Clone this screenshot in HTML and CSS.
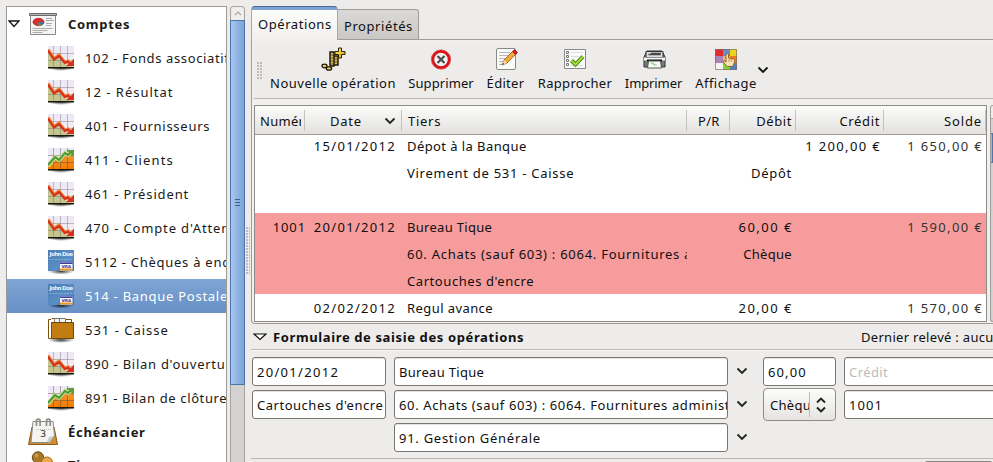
FILE: index.html
```html
<!DOCTYPE html>
<html lang="fr">
<head>
<meta charset="utf-8">
<title>Comptes</title>
<link rel="stylesheet" href="styles.css">
</head>
<body>
<svg class="defs" width="0" height="0">
  <defs>
    <linearGradient id="sky" x1="0" y1="0" x2="0" y2="1"><stop offset="0" stop-color="#ece8f7"/><stop offset="1" stop-color="#f7edee"/></linearGradient>
    <linearGradient id="orange" x1="0" y1="0" x2="0" y2="1"><stop offset="0" stop-color="#ee9b38"/><stop offset="1" stop-color="#f57900"/></linearGradient>
    <radialGradient id="shade"><stop offset="0" stop-color="#000" stop-opacity=".75"/><stop offset="1" stop-color="#000" stop-opacity="0"/></radialGradient>
    <linearGradient id="cardblue" x1="0" y1="0" x2="1" y2="1"><stop offset="0" stop-color="#4a7db5"/><stop offset=".6" stop-color="#5b8ec4"/><stop offset="1" stop-color="#3a6ca6"/></linearGradient>
    <linearGradient id="gold" x1="0" y1="0" x2="1" y2="1"><stop offset="0" stop-color="#ffef78"/><stop offset="1" stop-color="#d8a400"/></linearGradient>
  </defs>
  <symbol id="down" viewBox="0 0 26 26">
    <ellipse cx="13" cy="22" rx="13" ry="3" fill="url(#shade)"/>
    <path d="M0 0h26v22H0z" fill="url(#sky)"/>
    <path d="M0 5l6 9 5-3 7 8 4-1 4 3v1H0z" fill="#c3c58d"/>
    <path d="M5.500 0v22M12.500 0v22M19.500 0v22M0 7.500h26M0 14.500h26" stroke="#6d6472" stroke-opacity=".4" fill="none"/>
    <path d="M0 3.500l6 9 5-3.500 6 7.500 3-1.500 3 3" fill="none" stroke="#ee8b3c" stroke-width="3.200"/>
    <path d="M0 4.500l6 9 5-3.500 6 7 3-1.500 3 3" fill="none" stroke="#d5301f" stroke-width="2.200"/>
    <path d="M26 12.500v7.500h-8l4-3z" fill="#d5301f"/>
    <path d="M0 21h26v1.500H0z" fill="#17190c"/>
  </symbol>
  <symbol id="up" viewBox="0 0 26 26">
    <ellipse cx="13" cy="22" rx="13" ry="3" fill="url(#shade)"/>
    <path d="M0 0h26v22H0z" fill="url(#sky)"/>
    <path d="M0 19l7-9 4 3 6-7 4 2 5-3v17H0z" fill="url(#orange)"/>
    <path d="M5.500 0v22M12.500 0v22M19.500 0v22M0 7.500h26M0 14.500h26" stroke="#4c3d2c" stroke-opacity=".4" fill="none"/>
    <path d="M0 18l7-9 4 3 6-7 3 2 3-3" fill="none" stroke="#c0d9a0" stroke-width="4"/>
    <path d="M0 17l7-8 4 3 6-7 3 2 4-4" fill="none" stroke="#4a9a24" stroke-width="1.900"/>
    <path d="M18 2h8v7l-3-3z" fill="#5d9c38"/>
    <path d="M0 21h26v1.500H0z" fill="#17190c"/>
  </symbol>
  <symbol id="card" viewBox="0 0 26 26">
    <ellipse cx="13" cy="21.500" rx="13" ry="3" fill="url(#shade)"/>
    <path d="M0 0h26v21H0z" fill="url(#cardblue)"/>
    <text x="1.500" y="5.500" class="cardname" textLength="23.500">John Doe</text>
    <path d="M1 9.500h25" stroke="#a9c5df" stroke-opacity=".6" stroke-dasharray="2 1"/>
    <path d="M12 12.500h12.500v8H12z" fill="#fff"/>
    <path d="M12 12.500h12.500v1.500H12z" fill="#453c9c"/>
    <path d="M12 18.500h12.500v2H12z" fill="#eb9a24"/>
    <text x="13.500" y="18.300" class="visa" textLength="9.500">VISA</text>
  </symbol>
</svg>

<div class="window">
  <aside class="tree">
    <div class="node root">
      <svg class="expander" width="12" height="8" viewBox="0 0 12 8"><path d="M1 1h10L6 6.500z" fill="#fff" stroke="#111" stroke-width="1.300"/></svg>
      <svg class="rooticon" width="30" height="24" viewBox="0 0 30 24">
        <path d="M2.500 3v19.500h25V3z" fill="#f4f4f3" stroke="#888a85"/>
        <path d="M1.500 1.500h27v2h-27z" fill="#b8bab6" stroke="#6b6d69"/>
        <ellipse cx="10.500" cy="10" rx="5.500" ry="3.700" fill="#dd2a2a" stroke="#8c1d1d" stroke-width=".7"/>
        <path d="M10.500 10h5.500a5.500 3.700 0 0 1-5 3.700z" fill="#3b70b4"/><path d="M10.500 10l3 3-3 .7z" fill="#57a639"/>
        <path d="M18 6.500h6M18 8.500h8M18 11.500h6M18 13.500h5M4.500 16.500h20M4.500 18.500h15M4.500 20.500h10" stroke="#aaaba8"/>
      </svg>
      <b>Comptes</b>
    </div>
    <div class="node"><svg class="ico"><use href="#down"/></svg><span class="s65">102 - Fonds associatifs</span></div>
    <div class="node"><svg class="ico"><use href="#down"/></svg><span class="s100">12 - Résultat</span></div>
    <div class="node"><svg class="ico"><use href="#down"/></svg><span class="s75">401 - Fournisseurs</span></div>
    <div class="node"><svg class="ico"><use href="#up"/></svg><span class="s110">411 - Clients</span></div>
    <div class="node"><svg class="ico"><use href="#down"/></svg><span class="s85">461 - Président</span></div>
    <div class="node"><svg class="ico"><use href="#down"/></svg><span class="s85">470 - Compte d'Attente</span></div>
    <div class="node"><svg class="ico"><use href="#card"/></svg><span class="s75">5112 - Chèques à encaisser</span></div>
    <div class="node selected"><svg class="ico"><use href="#card"/></svg><span class="s75">514 - Banque Postale</span></div>
    <div class="node">
      <svg class="ico" viewBox="0 0 26 26"><ellipse cx="13" cy="22" rx="13" ry="3" fill="url(#shade)"/><path d="M.5 20.500V1.500H3l1-1h2.500l1 1h16V5" fill="#fff" stroke="#79520d"/><path d="M6.500 5V.5h11V5M11.500 1v4" fill="#f5f5f5" stroke="#777"/><path d="M3.500 20.500V4.500h22v16z" fill="#c17d11" stroke="#6c460a"/><path d="M.5 20.500h3v-16" fill="none" stroke="#79520d"/></svg>
      <span class="s100">531 - Caisse</span>
    </div>
    <div class="node"><svg class="ico"><use href="#down"/></svg><span class="s75">890 - Bilan d'ouverture</span></div>
    <div class="node"><svg class="ico"><use href="#up"/></svg><span class="s65">891 - Bilan de clôture</span></div>
    <div class="node second">
      <svg width="30" height="28" viewBox="0 0 30 28"><path d="M4 9h22l3.500 17.500h-29z" fill="#cd8d35" stroke="#8d5d15"/><path d="M5 3.500h20l1.500 14-5 7H3z" fill="#f4f4f2" stroke="#8b8b88"/><path d="M26.500 17.500l-5 7L19 24l2-5z" fill="#c9cdc6"/><path d="M8.500 8V3a1.800 1.800 0 0 1 3.600 0v5M18.500 8V3a1.800 1.800 0 0 1 3.600 0v5" fill="none" stroke="#8b8e89" stroke-width="1.700"/><path d="M8 11.500h15" stroke="#bbb" stroke-dasharray="1 1"/><text x="12" y="19" class="day" textLength="6.500" lengthAdjust="spacingAndGlyphs">3</text></svg>
      <b>Échéancier</b>
    </div>
    <div class="node second tiers">
      <svg width="30" height="28" viewBox="0 0 30 28"><path d="M4 24q1-9 8-11 7 2 8 11z" fill="#88601e"/><circle cx="10" cy="6.500" r="5.700" fill="#a87828" stroke="#6c460a"/><circle cx="19" cy="11.500" r="5.500" fill="#e9a84c" stroke="#aa6b16"/><circle cx="8.500" cy="4.500" r="2" fill="#c79b52"/></svg>
      <b>Tiers</b>
    </div>
  </aside>

  <div class="scroll">
    <div class="stepper"><svg width="8" height="5" viewBox="0 0 8 5"><path d="M1 4l3-3 3 3" fill="none" stroke="#aaa8a4" stroke-width="1.200"/></svg></div>
    <div class="thumb"><i></i><i></i><i></i></div>
  </div>
  <div class="grip"></div>

  <main>
    <div class="tabs">
      <div class="tab active"><span class="s55">Opérations</span></div>
      <div class="tab"><span class="s55">Propriétés</span></div>
    </div>
    <section class="book">
      <div class="toolbar">
        <div class="handle"></div>
        <button class="tool b-new">
          <svg width="26" height="24" viewBox="0 0 26 24"><path d="M10 5h4v14h-4zM14 9h4v9h-4z" fill="#d9ba62" stroke="#211a0a" stroke-width="1.500"/><path d="M10 8h4M10 11h4M10 14h4M14 12h4M14 15h4M10 17h4" stroke="#4b3a13" stroke-width=".8"/><ellipse cx="4.500" cy="19" rx="2.500" ry="1.800" fill="#edcf70" stroke="#211a0a" stroke-width="1.300"/><ellipse cx="9" cy="21.500" rx="2.700" ry="1.700" fill="#edcf70" stroke="#211a0a" stroke-width="1.300"/><path d="M18.500 1h3v3.500H25v3h-3.500V11h-3V7.500H15v-3h3.500z" fill="url(#gold)" stroke="#2b230a"/></svg>
          <span class="s50">Nouvelle opération</span>
        </button>
        <button class="tool b-del">
          <svg width="24" height="24" viewBox="0 0 24 24"><circle cx="12" cy="12.500" r="8.300" fill="#f2f2f1" stroke="#d3141b" stroke-width="3"/><circle cx="12" cy="12.500" r="9.600" fill="none" stroke="#eb5054" stroke-width=".8"/><path d="M8.500 9l7 7M15.500 9l-7 7" stroke="#4a4d4a" stroke-width="2.200"/></svg>
          <span class="s10">Supprimer</span>
        </button>
        <button class="tool b-edit">
          <svg width="24" height="24" viewBox="0 0 24 24"><rect x="2.500" y="1.500" width="19" height="21" rx="1.500" fill="#fafafa" stroke="#888a85"/><path d="M5 5.500h11M5 8.500h10M5 11.500h8M5 14.500h5M5 17.500h3" stroke="#b8b8b6"/><path d="M8 18l2-5 8.500-8.500 3 3L13 16z" fill="#f5a53a" stroke="#8f5b18" stroke-width=".8"/><path d="M8 18l2-5 3 3z" fill="#f3dfba"/><path d="M8 18l1-2 1.200 1z" fill="#222"/><path d="M18.500 4.500l2-1.800 3 3-2 1.800z" fill="#d81e24" stroke="#a4171c"/></svg>
          <span>Éditer</span>
        </button>
        <button class="tool b-rap">
          <svg width="24" height="24" viewBox="0 0 24 24"><path d="M1.500 2.500h21v19h-21z" fill="#fafafa" stroke="#888a85"/><path d="M3.500 4.500h2v2h-2zM3.500 8.500h2v2h-2zM3.500 12.500h2v2h-2zM3.500 16.500h2v2h-2z" fill="#fff" stroke="#777"/><path d="M8 5.500h12M8 9.500h8M8 18.500h12" stroke="#ddd"/><path d="M8.500 13.500l4 4 7.500-8" fill="none" stroke="#3c7a06" stroke-width="4"/><path d="M8.500 13.500l4 4 7.500-8" fill="none" stroke="#a5e339" stroke-width="2"/></svg>
          <span>Rapprocher</span>
        </button>
        <button class="tool b-imp">
          <svg width="24" height="24" viewBox="0 0 24 24"><path d="M2 10l3-6h15l3 6v10H2z" fill="#75797a" stroke="#303334"/><path d="M4 4.500h17v6H4z" fill="#d9dbda" stroke="#303334"/><path d="M6.500 7.500h12M9 6.500h10" stroke="#44484a" stroke-width="1.500"/><path d="M2 10.500h21v3H2z" fill="#f2f3f2"/><path d="M5 13.500h15" stroke="#111" stroke-width="2"/><path d="M6.500 14h12l1 7h-14z" fill="#f8fbf7" stroke="#555"/><path d="M8 16l3-1 2 2 3 1-3 1z" fill="#add4a1"/></svg>
          <span class="s0">Imprimer</span>
        </button>
        <button class="tool b-aff">
          <svg width="24" height="24" viewBox="0 0 24 24"><path d="M1 2h8v7H1z" fill="#e12b2f"/><path d="M9 2h7v7H9z" fill="#638fc7"/><path d="M16 2h7v7h-7z" fill="#ecd51d"/><path d="M1 9h8v7H1z" fill="#ad83b8"/><path d="M9 9h7v7H9z" fill="#e7b66c"/><path d="M16 9h7v7h-7z" fill="#ef7b18"/><path d="M1 16h8v7H1z" fill="#f4f4f2"/><path d="M9 16h7v7H9z" fill="#86cf36"/><path d="M16 16h7v7h-7z" fill="#507fbd"/><path d="M1.500 2.500h21v20h-21z" fill="none" stroke="#796c6b" stroke-opacity=".7"/><path d="M12 15V8q0-1.500 1.200-1.500T14.500 8v3l5 1q1 .3 1 1.500 0 4-2 6h-5L9 15q0-1.500 1.300-1z" fill="#fbe2b5" stroke="#8d5e20" stroke-width=".9"/><path d="M15 12v3M17.200 12v3" stroke="#b9823d" stroke-width=".8"/></svg>
          <span class="s40">Affichage</span>
        </button>
        <svg class="chev" width="12" height="8" viewBox="0 0 12 8"><path d="M1.500 1.500L6 6l4.500-4.500" fill="none" stroke="#111" stroke-width="1.800"/></svg>
      </div>
      <div class="listwrap">
        <div class="list">
          <div class="grid head">
            <div class="numhead"><span>Numéro</span></div>
            <div class="datehead"><span class="s75">Date</span><svg width="12" height="8" viewBox="0 0 12 8"><path d="M1.500 1.500L6 6l4.500-4.500" fill="none" stroke="#222" stroke-width="1.800"/></svg></div>
            <div class="tiershead"><span class="s75">Tiers</span></div>
            <div class="prhead"><span>P/R</span></div>
            <div class="num"><span class="s55">Débit</span></div>
            <div class="num"><span class="s65">Crédit</span></div>
            <div class="num solde"><span class="s85">Solde</span></div>
          </div>
          <div class="rows">
            <div class="grid"><div></div><div class="num date">15/01/2012</div><div class="tx s40">Dépot à la Banque</div><div></div><div></div><div class="num amt">1 200,00 €</div><div class="num amt solde light">1 650,00 €</div></div>
            <div class="grid"><div></div><div></div><div class="tx s75">Virement de 531 - Caisse</div><div></div><div class="num s75">Dépôt</div></div>
            <div class="grid"></div>
            <div class="marked">
              <div class="grid"><div class="num number">1001</div><div class="num date">20/01/2012</div><div class="tx">Bureau Tique</div><div></div><div class="num amt short">60,00 €</div><div></div><div class="num amt solde light">1 590,00 €</div></div>
              <div class="grid"><div></div><div></div><div class="tx s75">60. Achats (sauf 603) : 6064. Fournitures a</div><div></div><div class="num">Chèque</div></div>
              <div class="grid"><div></div><div></div><div class="tx s55">Cartouches d'encre</div></div>
            </div>
            <div class="grid"><div></div><div class="num date">02/02/2012</div><div class="tx s40">Regul avance</div><div></div><div class="num amt short">20,00 €</div><div></div><div class="num amt solde light">1 570,00 €</div></div>
          </div>
        </div>
        <div class="scroll2"><div class="step2"></div><div class="thumb2"></div></div>
      </div>
    </section>

    <div class="formhead">
      <svg width="14" height="8" viewBox="0 0 14 8"><path d="M1 1h12L7 6.500z" fill="#fff" stroke="#111" stroke-width="1.200"/></svg>
      <b class="title">Formulaire de saisie des opérations</b>
      <span>Dernier relevé : aucun</span>
    </div>
    <div class="form">
      <div class="field"><span class="s130">20/01/2012</span></div>
      <div class="field"><span>Bureau Tique</span></div>
      <svg class="drop" width="12" height="8" viewBox="0 0 12 8"><path d="M1.500 1.500L6 6l4.500-4.500" fill="none" stroke="#222" stroke-width="1.800"/></svg>
      <div class="field"><span class="s110">60,00</span></div>
      <div class="field ghost"><span class="s40">Crédit</span></div>

      <div class="field"><span class="s50">Cartouches d'encre</span></div>
      <div class="field"><span class="s65">60. Achats (sauf 603) : 6064. Fournitures administr</span></div>
      <svg class="drop" width="12" height="8" viewBox="0 0 12 8"><path d="M1.500 1.500L6 6l4.500-4.500" fill="none" stroke="#222" stroke-width="1.800"/></svg>
      <div class="combo"><span>Chèque</span><svg width="12" height="16" viewBox="0 0 12 16"><path d="M2 5.500l4-4 4 4M2 10.500l4 4 4-4" fill="none" stroke="#222" stroke-width="1.900"/></svg></div>
      <div class="field"><span class="s110">1001</span></div>

      <div></div>
      <div class="field"><span class="s75">91. Gestion Générale</span></div>
      <svg class="drop" width="12" height="8" viewBox="0 0 12 8"><path d="M1.500 1.500L6 6l4.500-4.500" fill="none" stroke="#222" stroke-width="1.800"/></svg>
    </div>
    <div class="foot"><div class="footbtn"></div></div>
  </main>
</div>
</body>
</html>
```
FILE: styles.css
```css
* { box-sizing: border-box; }
body {
  margin: 0;
  background: #edeceb;
  color: #101010;
  font: 13px/18px "Noto Sans", "Open Sans", sans-serif;
  letter-spacing: .3px;
  white-space: nowrap;
  overflow: hidden;
}
svg { display: block; flex: none; }
.defs { position: absolute; }
.window { display: flex; width: 993px; height: 462px; padding: 6px 0 0 6px; overflow: hidden; }

/* tracking steps */
.s0 { letter-spacing: -.1px; }
.s10 { letter-spacing: .1px; }
.s40 { letter-spacing: .42px; }
.s50 { letter-spacing: .52px; }
.s55 { letter-spacing: .57px; }
.s65 { letter-spacing: .63px; }
.s75 { letter-spacing: .73px; }
.s85 { letter-spacing: .86px; }
.s100 { letter-spacing: 1px; }
.s110 { letter-spacing: 1.1px; }
.s130 { letter-spacing: 1.3px; }

.tree { width: 221px; flex: none; background: #fff; border: 1px solid #9d9b96; border-bottom: 0; overflow: hidden; color: #1a1a1a; }
.node { height: 34px; display: flex; align-items: center; padding-left: 41px; overflow: hidden; }
.node > span { margin-left: 11px; }
.node b { letter-spacing: .7px; }
.ico { width: 26px; height: 26px; margin-top: 2px; }
.root { padding-left: 1px; }
.rooticon { margin-left: 8px; }
.root b { margin-left: 10px; }
.second { padding-left: 21px; }
.second b { margin-left: 10px; }
.tiers { align-items: flex-start; padding-top: 2px; }
.tiers b { margin-top: 5px; }
.selected { background: linear-gradient(#80a4d5, #6790c5); color: #fff; }
.cardname { font: bold 5.500px "DejaVu Sans", sans-serif; fill: #e9f2fb; letter-spacing: 0; }
.visa { font: bold 4px "DejaVu Sans", sans-serif; fill: #35308c; letter-spacing: 0; }
.day { font: 8px "DejaVu Sans", sans-serif; fill: #333; }

.scroll { width: 15px; margin-left: 3px; flex: none; background: #d3d2d0; border: 1px solid #a5a39f; border-bottom: 0; border-radius: 4px 4px 0 0; }
.stepper { height: 13px; display: grid; place-items: center; background: #efeeed; border-radius: 3px 3px 0 0; }
.thumb { height: 365px; margin: 0 -1px; border: 1px solid #4e75ab; background: linear-gradient(90deg, #a9c8ef, #90b3e2 50%, #7ea3d6); display: flex; flex-direction: column; align-items: center; justify-content: center; gap: 2px; }
.thumb i { width: 5px; height: 1px; background: #38609a; }
.grip { width: 4px; height: 47px; margin: 221px 1px 0 1px; flex: none; background: radial-gradient(circle at 1px 1px, #bdbbb7 .7px, transparent .9px) 0 0 / 3px 3px; }

main { flex: 1; min-width: 0; }
.tabs { display: flex; align-items: flex-end; height: 33px; }
.tab { height: 30px; width: 81px; border: 1px solid #9f9d99; border-left: 0; border-bottom: 0; border-radius: 0 3px 0 0; background: linear-gradient(#dad9d7, #c9c8c5); display: flex; align-items: center; padding: 2px 0 0 6px; }
.tab.active { width: 87px; height: 34px; margin-bottom: -1px; border: 1px solid #aaa8a4; border-top: 1px solid #44699d; border-bottom: 0; border-radius: 4px 4px 0 0; background: linear-gradient(#7da3d3 3px, #fcfcfb 3px, #f2f1f0); padding: 1px 0 0 6px; position: relative; }
.book { height: 285px; border: 1px solid #9f9d99; border-right: 0; border-radius: 0 0 0 4px; padding: 3px 0 0 2px; background: #f1f0ef; }
.toolbar { height: 56px; background: #edeceb; border-bottom: 1px solid #b9b8b5; display: flex; align-items: flex-start; }
.handle { width: 5px; height: 17px; margin: 19px 0 0 3px; background: radial-gradient(circle at 1px 1px, #bdbbb7 .7px, transparent .9px) 0 0 / 3px 3px; }
.tool { border: 0; background: none; padding: 4px 0 0; font: inherit; letter-spacing: inherit; color: inherit; display: flex; flex-direction: column; align-items: center; gap: 3px; }
.b-new { width: 126px; margin-left: 8px; }
.b-del { width: 66px; margin-left: 12px; }
.b-edit { width: 39px; margin-left: 12px; }
.b-rap { width: 74px; margin-left: 13px; }
.b-imp { width: 57px; margin-left: 13px; }
.b-aff { width: 60px; margin-left: 14px; }
.chev { margin: 23px 0 0 1px; }

.listwrap { display: flex; gap: 3px; margin-top: 6px; }
.list { width: 733px; height: 217px; flex: none; border: 1px solid #8f8d89; overflow: hidden; background: #fff; }
.grid { display: grid; grid-template-columns: 50px 97px 285px 43px 66px 88px 102px; height: 27px; align-items: center; }
.head { height: 29px; background: linear-gradient(#fbfbfa, #e3e2e0); border-bottom: 1px solid #9f9d99; }
.head > div { height: 21px; border-right: 1px solid #c3c2bf; display: flex; align-items: center; overflow: hidden; margin-top: 1px; }
.head .num { justify-content: flex-end; padding-right: 3px; }
.numhead { padding: 0 3px 0 5px; }
.numhead span { overflow: hidden; }
.datehead { padding-left: 25px; justify-content: space-between; padding-right: 5px; }
.tiershead { padding-left: 6px; }
.prhead { padding-left: 11px; }
.num { text-align: right; padding-right: 4px; }
.rows { margin-top: -3px; position: relative; z-index: 0; }
.rows .grid > .number { padding-right: 0; margin-right: -1px; letter-spacing: .9px; }
.rows .date { padding-right: 6px; letter-spacing: 1.3px; }
.rows .amt { padding-right: 3px; letter-spacing: 1.35px; }
.rows .short { letter-spacing: 1.5px; }
.rows .solde { padding-right: 3px; }
.tx { padding-left: 5px; overflow: hidden; }
.light { color: #333; }
.marked { background: #f79c9c; }
.scroll2 { flex: 1; background: #d3d2d0; border: 1px solid #9f9d99; border-right: 0; border-radius: 4px 0 0 4px; overflow: hidden; }
.step2 { height: 13px; background: #efeeed; border-bottom: 1px solid #a5a39f; }
.thumb2 { height: 30px; margin: 14px 0 0 -1px; background: #92b5e5; border: 1px solid #4e75ab; }

.formhead { height: 26px; display: flex; align-items: center; padding: 0 0 0 2px; border-bottom: 1px solid #b9b8b5; box-shadow: 0 1px #fafafa; }
.title { margin-left: 6px; width: 588px; flex: none; letter-spacing: .62px; }
.form { display: grid; grid-template-columns: 134px 334px 19px 73px 160px; grid-auto-rows: 29px; gap: 4px 8px; padding: 7px 0 0 1px; }
.field { border: 1px solid #797773; border-radius: 3px; background: #fff; box-shadow: inset 0 1px #e4e3e2; padding: 0 0 0 4px; display: flex; align-items: center; overflow: hidden; }
.field span { overflow: hidden; }
.drop { margin: 10px 0 0 0; justify-self: start; }
.ghost { color: #bdbcba; }
.combo { height: 33px; margin-top: -2px; border: 1px solid #8f8d89; border-radius: 4px; background: linear-gradient(#fcfcfb, #e5e4e2); display: flex; align-items: center; padding-left: 6px; }
.combo span { width: 40px; height: 25px; line-height: 27px; overflow: hidden; border-right: 1px solid #bbb9b5; }
.combo svg { margin-left: 5px; }
.foot { margin-top: 6px; border-top: 1px solid #b9b8b5; padding-top: 2px; }
.footbtn { height: 10px; margin-left: 673px; border: 1px solid #85837f; border-radius: 3px; }
```
